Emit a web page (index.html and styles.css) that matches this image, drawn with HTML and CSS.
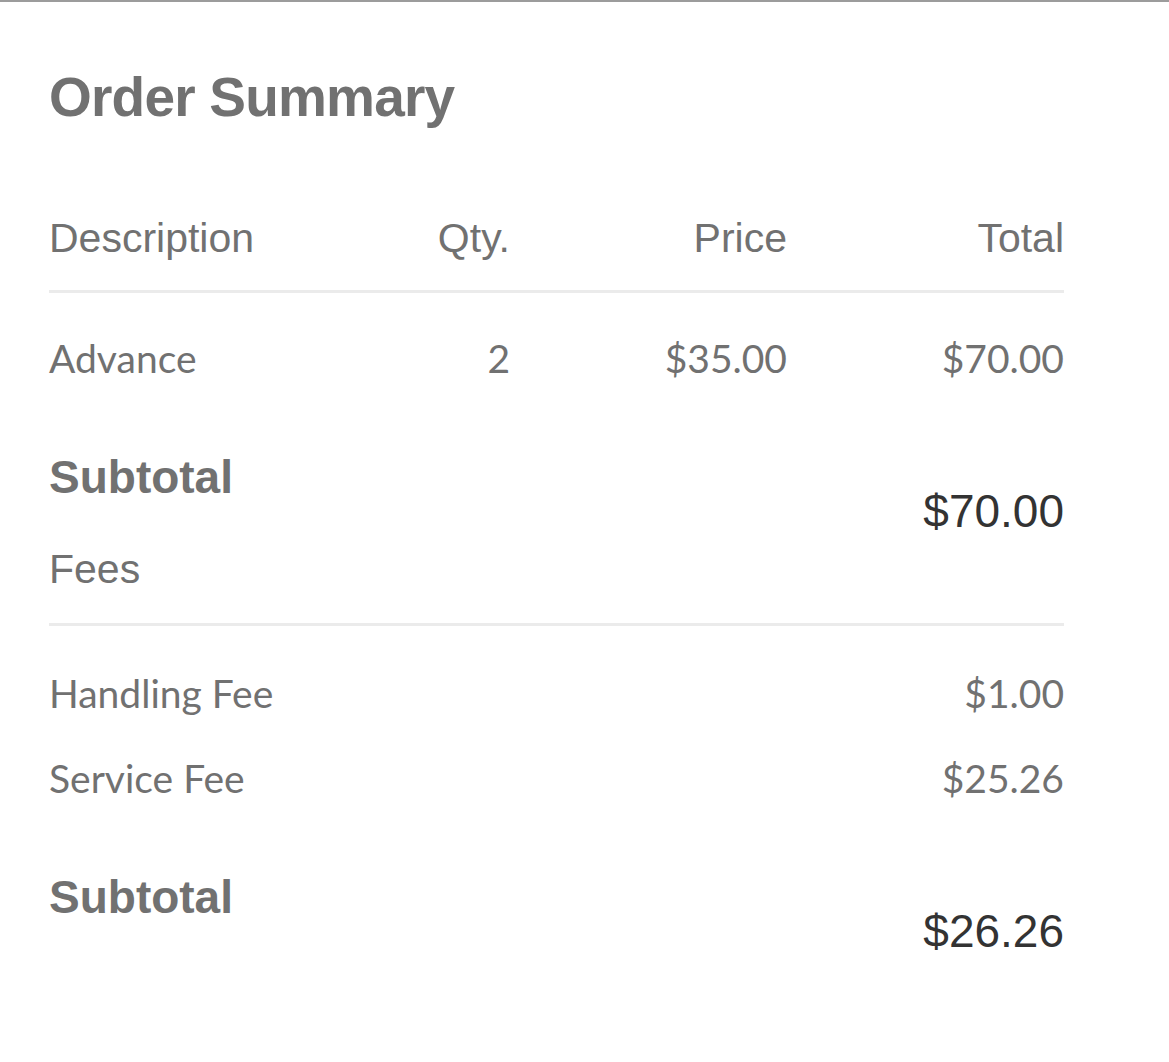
FILE: index.html
```html
<!DOCTYPE html>
<html lang="en">

<head>
    <meta charset="UTF-8">
    <meta name="viewport" content="width=device-width, initial-scale=1.0">
    <title>Order Summary</title>
    <link rel="stylesheet" href="styles.css">
</head>

<body>
    <div class="summary">
        <h1 class="summary-title">Order Summary</h1>

        <div class="table-head">
            <div>Description</div>
            <div class="num">Qty.</div>
            <div class="num">Price</div>
            <div class="num">Total</div>
        </div>

        <div class="table-row">
            <div>Advance</div>
            <div class="num">2</div>
            <div class="num">$35.00</div>
            <div class="num">$70.00</div>
        </div>

        <div class="totals">
            <div class="totals-labels">
                <div class="totals-title">Subtotal</div>
                <div class="section-title">Fees</div>
            </div>
            <div class="totals-value">$70.00</div>
        </div>

        <div class="fees">
            <div class="fee-row">
                <div>Handling Fee</div>
                <div>$1.00</div>
            </div>
            <div class="fee-row">
                <div>Service Fee</div>
                <div>$25.26</div>
            </div>
        </div>

        <div class="totals">
            <div class="totals-labels">
                <div class="totals-title">Subtotal</div>
            </div>
            <div class="totals-value">$26.26</div>
        </div>
    </div>
</body>

</html>
```

FILE: styles.css
```css
body {
    margin: 0;
    background-color: white;
    border-top: 2px solid #9c9c9c;
    color: #717171;
    font-family: "Liberation Sans", Arial, sans-serif;
}

.summary {
    width: 1015px;
    padding: 62px 49px 40px;
}

.summary-title {
    margin: 0;
    font-size: 55px;
    line-height: 66px;
    font-weight: bold;
    letter-spacing: -0.8px;
}

.table-head,
.table-row {
    display: grid;
    grid-template-columns: minmax(0, 1fr) repeat(3, 277px);
}

.table-head {
    margin-top: 83px;
    padding-bottom: 27px;
    border-bottom: 3px solid #ebebeb;
    font-size: 41px;
    line-height: 50px;
}

.table-row {
    margin-top: 41px;
    font-family: Lato, sans-serif;
    font-size: 39px;
    line-height: 48px;
}

.num {
    text-align: right;
}

.totals {
    display: flex;
    justify-content: space-between;
    align-items: flex-start;
    margin-top: 67px;
}

.totals-title {
    font-size: 46px;
    line-height: 56px;
    font-weight: bold;
}

.section-title {
    margin-top: 39px;
    font-size: 41px;
    line-height: 50px;
}

.totals-value {
    margin-top: 34px;
    color: #333;
    font-size: 46px;
    line-height: 56px;
}

.fees {
    margin-top: 29px;
    border-top: 3px solid #ebebeb;
    padding-top: 43px;
    display: flex;
    flex-direction: column;
    gap: 37px;
}

.fee-row {
    display: flex;
    justify-content: space-between;
    font-family: Lato, sans-serif;
    font-size: 39px;
    line-height: 48px;
}
```
